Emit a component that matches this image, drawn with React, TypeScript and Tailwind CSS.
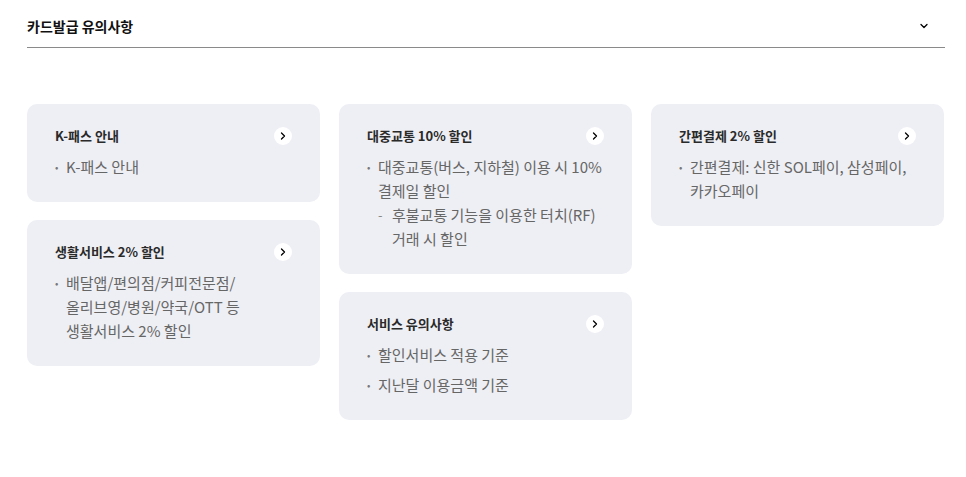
import { ChevronDown, ChevronRight } from "lucide-react";

type Item = { text: string[]; sub?: string[] };
type Notice = { title: string; items: Item[] };

const columns: Notice[][] = [
  [
    { title: "K-패스 안내", items: [{ text: ["K-패스 안내"] }] },
    {
      title: "생활서비스 2% 할인",
      items: [{ text: ["배달앱/편의점/커피전문점/", "올리브영/병원/약국/OTT 등", "생활서비스 2% 할인"] }],
    },
  ],
  [
    {
      title: "대중교통 10% 할인",
      items: [
        {
          text: ["대중교통(버스, 지하철) 이용 시 10%", "결제일 할인"],
          sub: ["후불교통 기능을 이용한 터치(RF)", "거래 시 할인"],
        },
      ],
    },
    {
      title: "서비스 유의사항",
      items: [{ text: ["할인서비스 적용 기준"] }, { text: ["지난달 이용금액 기준"] }],
    },
  ],
  [
    {
      title: "간편결제 2% 할인",
      items: [{ text: ["간편결제: 신한 SOL페이, 삼성페이,", "카카오페이"] }],
    },
  ],
];

function NoticeCard({ notice }: { notice: Notice }) {
  return (
    <div className="rounded-[10px] bg-[#eeeff4] px-[28px] pt-[22px] pb-[23px]">
      <div className="flex items-center justify-between">
        <div className="text-[13px] leading-[20px] font-bold text-[#2a2a2a]">{notice.title}</div>
        <div className="flex h-[18px] w-[18px] items-center justify-center rounded-full bg-white">
          <ChevronRight className="h-[12px] w-[12px] text-black" strokeWidth={2.6} />
        </div>
      </div>
      <ul className="mt-[9px] space-y-[6px]">
        {notice.items.map((item, i) => (
          <li key={i} className="text-[15px] leading-[24px] text-[#666]">
            <div className="flex">
              <span className="w-[11px] shrink-0 text-[10px] text-[#777]">•</span>
              <div>
                {item.text.map((t) => (
                  <div key={t}>{t}</div>
                ))}
              </div>
            </div>
            {item.sub && (
              <div className="flex pl-[11px]">
                <span className="w-[14px] shrink-0 text-[13px] text-[#888]">-</span>
                <div>
                  {item.sub.map((t) => (
                    <div key={t}>{t}</div>
                  ))}
                </div>
              </div>
            )}
          </li>
        ))}
      </ul>
    </div>
  );
}

export default function App() {
  return (
    <div
      className="min-h-[477px] bg-white pl-[27px] pr-[21px]"
      style={{ fontFamily: '"Noto Sans CJK KR", "Noto Sans", sans-serif' }}
    >
      <div className="flex items-center justify-between border-b border-[#8a8a8a] pt-[16px] pb-[11px]">
        <div className="text-[14px] leading-[20px] font-bold text-[#111]">카드발급 유의사항</div>
        <ChevronDown className="mr-[15px] h-[12px] w-[12px] text-black" strokeWidth={2.6} />
      </div>
      <div className="mt-[56px] flex gap-[19px]">
        {columns.map((col, i) => (
          <div key={i} className="flex w-[293px] flex-col gap-[18px]">
            {col.map((n) => (
              <NoticeCard key={n.title} notice={n} />
            ))}
          </div>
        ))}
      </div>
    </div>
  );
}
